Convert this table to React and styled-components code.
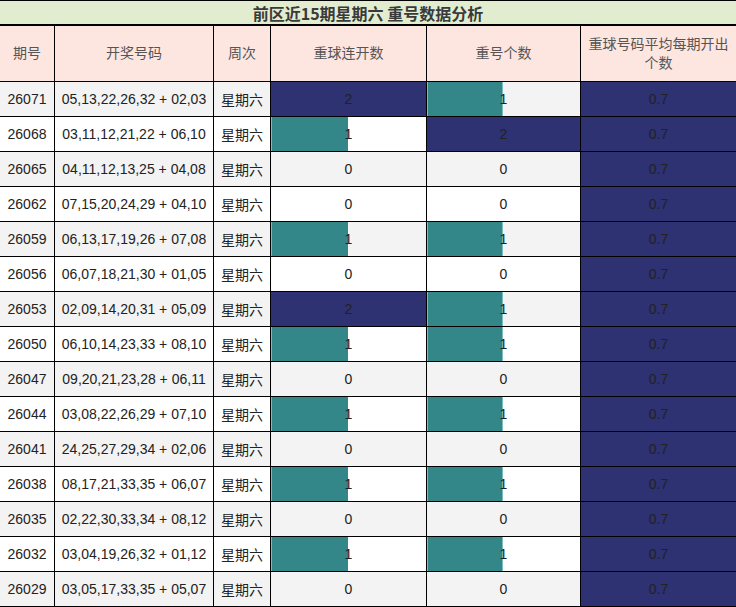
import React from 'react';
import styled, { createGlobalStyle } from 'styled-components';

const GlobalStyle = createGlobalStyle`
  html, body {
    margin: 0;
    padding: 0;
    background: #fff;
  }
  body {
    font-family: "Liberation Sans", Arial, "Noto Sans CJK SC", sans-serif;
  }
`;

const NAVY = '#2e3172';
const TEAL = '#338789';
const TEAL_EDGE = '#7cbcbd';

const Sheet = styled.div`
  width: 736px;
  border-top: 1px solid #000;
`;

const Title = styled.div`
  height: 23px;
  border-bottom: 2px solid #000;
  background: #e2edd0;
  color: #3a3a3a;
  font-family: "Noto Sans CJK SC", "Liberation Sans", sans-serif;
  font-size: 16px;
  font-weight: 700;
  display: flex;
  align-items: center;
  justify-content: center;
`;

const Grid = styled.div`
  display: grid;
  grid-template-columns: 54px 158px 56px 155px 153px 155px;
  grid-template-rows: 55px;
  grid-auto-rows: 34px;
  gap: 1px;
  background: #000;
  padding-bottom: 1px;
`;

const Head = styled.div`
  background: #fde5e0;
  color: #555;
  font-size: 14px;
  line-height: 19px;
  display: flex;
  align-items: center;
  justify-content: center;
  text-align: center;
  padding: 0 4px;
`;

const Cell = styled.div`
  background: ${(p) => (p.$alt ? '#f3f3f3' : '#fff')};
  color: #222;
  font-size: 14px;
  display: flex;
  align-items: center;
  justify-content: center;
  white-space: nowrap;
`;

const BarCell = styled(Cell)`
  background: ${(p) =>
    p.$value >= 2
      ? NAVY
      : p.$value === 1
      ? `linear-gradient(to right, ${TEAL_EDGE} 0 1px, ${TEAL} 1px calc(50% - 1px), ${TEAL_EDGE} calc(50% - 1px) 50%, ${p.$alt ? '#f3f3f3' : '#fff'} 50%)`
      : p.$alt
      ? '#f3f3f3'
      : '#fff'};
`;

const AvgCell = styled(Cell)`
  background: ${NAVY};
`;

const rows = [
  ['26071', '05,13,22,26,32 + 02,03', 2, 1],
  ['26068', '03,11,12,21,22 + 06,10', 1, 2],
  ['26065', '04,11,12,13,25 + 04,08', 0, 0],
  ['26062', '07,15,20,24,29 + 04,10', 0, 0],
  ['26059', '06,13,17,19,26 + 07,08', 1, 1],
  ['26056', '06,07,18,21,30 + 01,05', 0, 0],
  ['26053', '02,09,14,20,31 + 05,09', 2, 1],
  ['26050', '06,10,14,23,33 + 08,10', 1, 1],
  ['26047', '09,20,21,23,28 + 06,11', 0, 0],
  ['26044', '03,08,22,26,29 + 07,10', 1, 1],
  ['26041', '24,25,27,29,34 + 02,06', 0, 0],
  ['26038', '08,17,21,33,35 + 06,07', 1, 1],
  ['26035', '02,22,30,33,34 + 08,12', 0, 0],
  ['26032', '03,04,19,26,32 + 01,12', 1, 1],
  ['26029', '03,05,17,33,35 + 05,07', 0, 0],
];

const headers = ['期号', '开奖号码', '周次', '重球连开数', '重号个数', '重球号码平均每期开出个数'];

export default function App() {
  return (
    <>
      <GlobalStyle />
      <Sheet>
        <Title>前区近15期星期六 重号数据分析</Title>
        <Grid>
          {headers.map((h) => (
            <Head key={h}>{h}</Head>
          ))}
          {rows.map(([issue, nums, streak, repeat], i) => {
            const alt = i % 2 === 0;
            return (
              <React.Fragment key={issue}>
                <Cell $alt={alt}>{issue}</Cell>
                <Cell $alt={alt}>{nums}</Cell>
                <Cell $alt={alt}>星期六</Cell>
                <BarCell $alt={alt} $value={streak}>{streak}</BarCell>
                <BarCell $alt={alt} $value={repeat}>{repeat}</BarCell>
                <AvgCell>0.7</AvgCell>
              </React.Fragment>
            );
          })}
        </Grid>
      </Sheet>
    </>
  );
}
